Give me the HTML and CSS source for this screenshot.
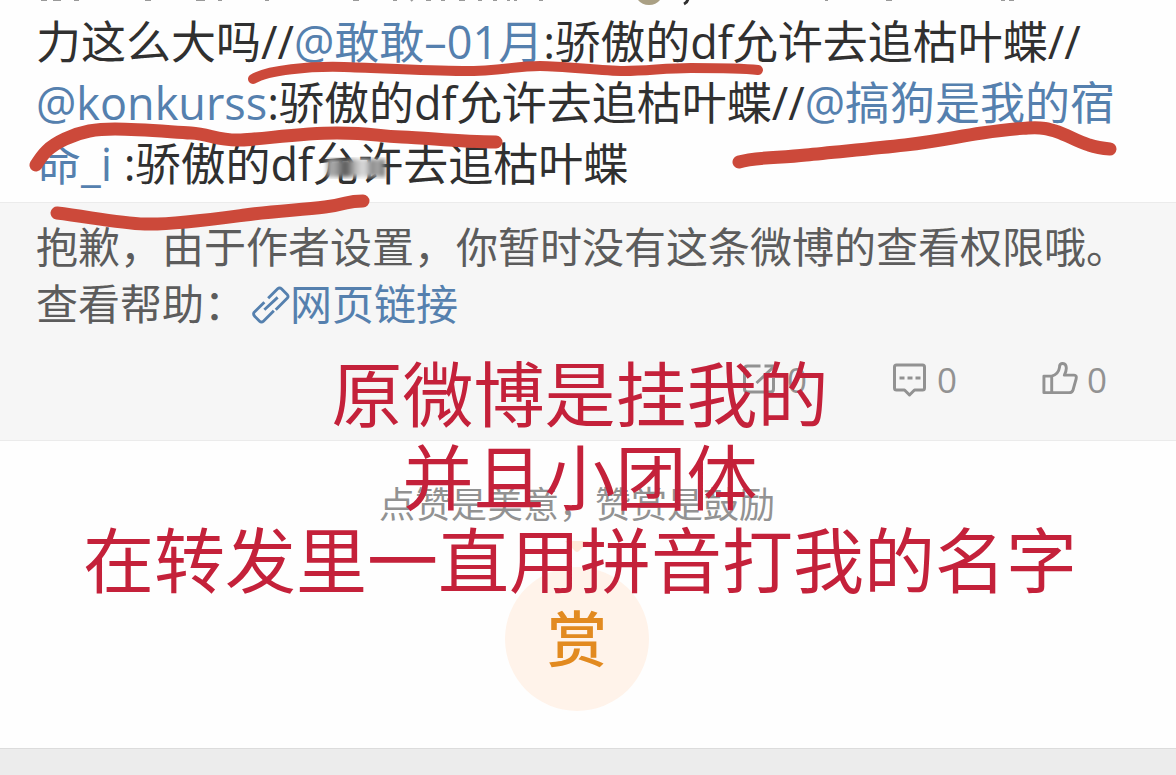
FILE: index.html
```html
<!DOCTYPE html>
<html lang="zh-CN">
<head>
<meta charset="utf-8">
<meta name="viewport" content="width=device-width, initial-scale=1">
<title>微博正文</title>
<link rel="stylesheet" href="styles.css">
</head>
<body>
<main class="page">
  <article class="post">
    <svg class="previous-line" viewBox="0 0 1176 11" aria-hidden="true">
      <path class="ink-marks" d="M41 0h6M53 0h8M74 0h5M145 0h6M196 0h9M218 0h4M265 0h4M353 0h6M393 0h4M411 1l2-2M426 0h5M441 0h4M459 0h6M478 0h4M493 0h4M507 0h3M514 0h3M539 0h4M825 0h3M886 0h6M1001 0h4M1009 0h5"/>
      <path class="emoji-edge" d="M638 0H660Q656 5 649 5Q642 5 638 0Z"/>
      <path class="comma" d="M688 -2Q688 2 684 4"/>
    </svg>
    <p class="post-text">力这么大吗//<a href="#gangan">@敢敢–01月</a>:骄傲的df允许去追枯叶蝶//<br><a href="#konkurss">@konkurss</a>:骄傲的df允许去追枯叶蝶//<a href="#gaogou">@搞狗是我的宿<br>命_i</a> :骄傲的df允许去追枯叶蝶</p>
  </article>

  <section class="quote">
    <p class="quote-text">抱歉，由于作者设置，你暂时没有这条微博的查看权限哦。<br>查看帮助：<a class="help-link" href="#help"><svg class="link-icon" viewBox="0 0 40 42" aria-hidden="true"><path d="M17 14L27 4Q29 2 31 4L37 10Q39 12 37 14L25 26M13 18L2 29Q1 31 3 33L8 38Q10 40 12 38L23 27M13 26L27 13"/></svg>网页链接</a></p>
    <div class="actions">
      <button class="action" type="button" aria-label="转发 0">
        <svg class="action-icon" viewBox="0 0 36 36" aria-hidden="true"><path d="M19 4H6Q3 4 3 7V27Q3 30 6 30H29Q32 30 32 27V16M15 21L32 5M23 4H33V13"/></svg><span>0</span>
      </button>
      <button class="action" type="button" aria-label="评论 0">
        <svg class="action-icon" viewBox="0 0 36 36" aria-hidden="true"><path d="M5 3H31Q33 3 33 5V26Q33 28 31 28H23L18 33L13 28H5Q3 28 3 26V5Q3 3 5 3ZM8 16H13M16 16H21M24 16H29"/></svg><span>0</span>
      </button>
      <button class="action" type="button" aria-label="赞 0">
        <svg class="action-icon" viewBox="0 0 38 36" aria-hidden="true"><path d="M3 14H11V31H3ZM11 14Q18 12 19 5Q19 1 22 1Q26 1 26 6Q26 9 24 13H34Q37 13 36 17L33 28Q32 31 29 31H11"/></svg><span>0</span>
      </button>
    </div>
  </section>

  <section class="reward">
    <p class="reward-text">点赞是美意，赞赏是鼓励</p>
    <svg class="pointer" viewBox="0 0 24 12" aria-hidden="true"><path d="M0 0H24L14 10Q12 12 10 10Z"/></svg>
    <button class="reward-button" type="button">赏</button>
  </section>

  <svg class="pen" viewBox="0 0 1176 240" aria-hidden="true">
    <defs>
      <linearGradient id="smear">
        <stop offset="0" stop-color="#999"/>
        <stop offset=".12" stop-color="#aaa"/>
        <stop offset=".32" stop-color="#555"/>
        <stop offset=".5" stop-color="#bbb"/>
        <stop offset=".64" stop-color="#ddd"/>
        <stop offset=".78" stop-color="#888"/>
        <stop offset=".88" stop-color="#aaa"/>
        <stop offset="1" stop-color="#666"/>
      </linearGradient>
      <filter id="soft"><feGaussianBlur stdDeviation="2"/></filter>
    </defs>
    <rect x="327" y="159" width="58" height="18" fill="url(#smear)" filter="url(#soft)"/>
    <path class="thin" d="M253 79C268 70 310 66 344 67S425 71 463 71S515 66 540 66S600 71 624 71S665 68 691 68S740 68 758 70"/>
    <path d="M36 165C43 154 48 147 65 139C82 131 96 129 115 129C140 129 172 132 191 133S218 141 241 140S300 133 337 133S375 136 402 137S460 142 496 142"/>
    <path d="M739 162C755 157 779 158 806 155S870 149 905 145S955 137 982 133S1014 129 1028 128S1049 129 1058 132S1078 142 1089 145Q1098 148 1110 149"/>
    <path d="M57 213C90 217 118 223 145 224S215 219 245 215S300 210 325 207S345 201 363 201"/>
  </svg>
  <p class="caption">原微博是挂我的<br>并且小团体<br>在转发里一直用拼音打我的名字</p>
</main>
</body>
</html>
```

FILE: styles.css
```css
* {
  box-sizing: border-box;
}

body {
  margin: 0;
  background: #ececec;
  color: #303030;
  font-family: "Open Sans", "Noto Sans CJK SC", sans-serif;
}

p {
  margin: 0;
}

a {
  color: #5580ae;
  text-decoration: none;
}

button {
  padding: 0;
  border: 0;
  background: none;
  font: inherit;
  cursor: pointer;
}

.page {
  position: relative;
  overflow: hidden;
  background: #fefefe;
  border-bottom: 1px solid #dcdcdc;
}

.post {
  padding-bottom: 8px;
}

.previous-line {
  display: block;
  width: 100%;
}

.ink-marks,
.comma {
  fill: none;
  stroke: #999;
  stroke-width: 2;
}

.comma {
  stroke: #303030;
  stroke-width: 3;
}

.emoji-edge {
  fill: #aaa084;
}

.post-text {
  padding: 0 36px;
  font-size: 45px;
  line-height: 61px;
  white-space: nowrap;
}

.quote {
  padding: 15px 36px 40px;
  border-top: 1px solid #ebebeb;
  border-bottom: 1px solid #ebebeb;
  background: #f6f6f6;
}

.quote-text {
  color: #5c5c5c;
  font-size: 42px;
  line-height: 57px;
  white-space: nowrap;
}

.link-icon {
  width: 38px;
  height: 40px;
  margin-left: 6px;
  vertical-align: -5px;
  fill: none;
  stroke: currentColor;
  stroke-width: 3;
}

.actions {
  display: flex;
  justify-content: flex-end;
  gap: 84px;
  padding-right: 33px;
  margin-top: 28px;
}

.action {
  display: flex;
  align-items: center;
  gap: 9px;
  color: #929292;
  font-size: 35px;
  line-height: 40px;
}

.action-icon {
  width: 37px;
  height: 36px;
  fill: none;
  stroke: currentColor;
  stroke-width: 3;
  stroke-linejoin: round;
}

.reward {
  display: flex;
  flex-direction: column;
  align-items: center;
  padding: 40px 22px 37px 0;
}

.reward-text {
  color: #929292;
  font-size: 36px;
  line-height: 48px;
}

.pointer {
  width: 24px;
  height: 12px;
  margin-top: 12px;
  fill: #ffe9d8;
}

.reward-button {
  width: 144px;
  height: 144px;
  margin-top: 14px;
  border-radius: 50%;
  background: #fff3ea;
  color: #e28a20;
  font-size: 60px;
  font-weight: 500;
  line-height: 80px;
}

.pen {
  position: absolute;
  top: 0;
  left: 0;
  width: 100%;
  fill: none;
  stroke: none;
  pointer-events: none;
}

.pen path {
  stroke: #cc493a;
  stroke-width: 13;
  stroke-linecap: round;
  stroke-linejoin: round;
}

.pen .thin {
  stroke-width: 10;
}

.caption {
  position: absolute;
  top: 352px;
  left: 0;
  width: 100%;
  padding-right: 16px;
  color: #c4213a;
  font-size: 71px;
  line-height: 83px;
  text-align: center;
  white-space: nowrap;
  pointer-events: none;
}
```
